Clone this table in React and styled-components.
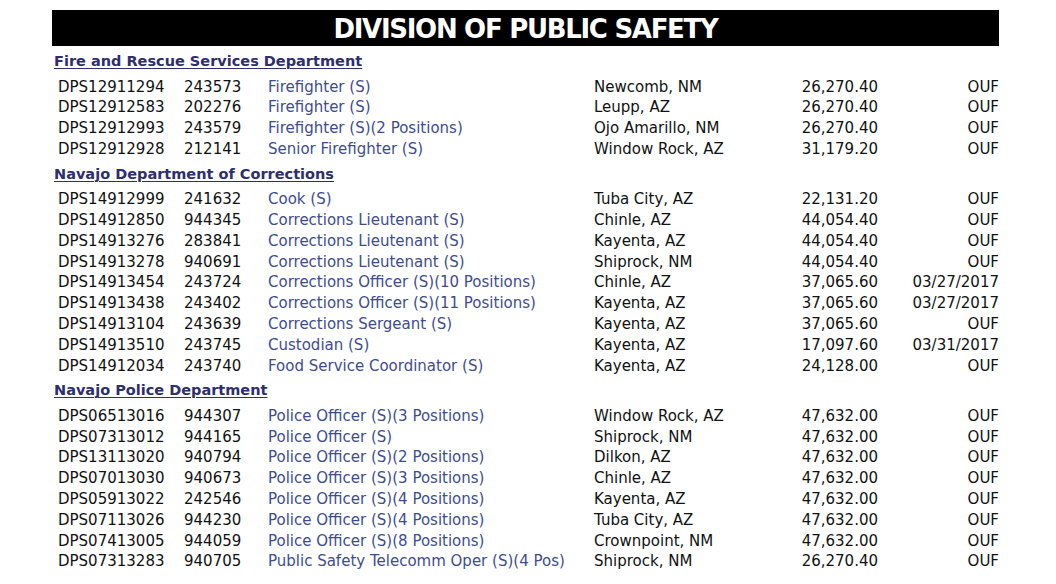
import React from 'react'
import styled, { createGlobalStyle } from 'styled-components'

const GlobalStyle = createGlobalStyle`
  html, body {
    margin: 0;
    background: #fff;
  }
  body {
    font-family: "DejaVu Sans", Verdana, sans-serif;
  }
`

const Page = styled.div`
  padding: 10px 57px 0 52px;
  width: 947px;
`

const Banner = styled.div`
  background: #000;
  height: 36px;
  display: flex;
  align-items: center;
  justify-content: center;
`

const BannerTitle = styled.h1`
  margin: 0;
  color: #fff;
  font-family: "DejaVu Sans", sans-serif;
  font-weight: bold;
  font-size: 26px;
  letter-spacing: -1.3px;
  line-height: 36px;
  padding-top: 2px;
`

const DeptTitle = styled.a`
  display: block;
  padding: 5px 0 3.5px 2px;
  line-height: 21px;
  font-size: 14.5px;
  font-weight: bold;
  color: #2e2e70;
  text-decoration: underline;
  text-decoration-thickness: 1px;
  text-underline-offset: 2px;
`

const Row = styled.div`
  box-sizing: border-box;
  display: grid;
  grid-template-columns: 126px 84px 326px 166px 118px 121px;
  padding: 2px 0 0 6px;
  height: 20.8px;
  line-height: 18.8px;
  font-size: 15px;
  color: #111;
  white-space: nowrap;
`

const Cell = styled.span`
  text-align: ${({ $right }) => ($right ? 'right' : 'left')};
`

const JobLink = styled.a`
  color: #3e4c92;
  text-decoration: none;
`

const sections = [
  {
    name: 'Fire and Rescue Services Department',
    rows: [
      ['DPS12911294', '243573', 'Firefighter (S)', 'Newcomb, NM', '26,270.40', 'OUF'],
      ['DPS12912583', '202276', 'Firefighter (S)', 'Leupp, AZ', '26,270.40', 'OUF'],
      ['DPS12912993', '243579', 'Firefighter (S)(2 Positions)', 'Ojo Amarillo, NM', '26,270.40', 'OUF'],
      ['DPS12912928', '212141', 'Senior Firefighter (S)', 'Window Rock, AZ', '31,179.20', 'OUF'],
    ],
  },
  {
    name: 'Navajo Department of Corrections',
    rows: [
      ['DPS14912999', '241632', 'Cook (S)', 'Tuba City, AZ', '22,131.20', 'OUF'],
      ['DPS14912850', '944345', 'Corrections Lieutenant (S)', 'Chinle, AZ', '44,054.40', 'OUF'],
      ['DPS14913276', '283841', 'Corrections Lieutenant (S)', 'Kayenta, AZ', '44,054.40', 'OUF'],
      ['DPS14913278', '940691', 'Corrections Lieutenant (S)', 'Shiprock, NM', '44,054.40', 'OUF'],
      ['DPS14913454', '243724', 'Corrections Officer (S)(10 Positions)', 'Chinle, AZ', '37,065.60', '03/27/2017'],
      ['DPS14913438', '243402', 'Corrections Officer (S)(11 Positions)', 'Kayenta, AZ', '37,065.60', '03/27/2017'],
      ['DPS14913104', '243639', 'Corrections Sergeant (S)', 'Kayenta, AZ', '37,065.60', 'OUF'],
      ['DPS14913510', '243745', 'Custodian (S)', 'Kayenta, AZ', '17,097.60', '03/31/2017'],
      ['DPS14912034', '243740', 'Food Service Coordinator (S)', 'Kayenta, AZ', '24,128.00', 'OUF'],
    ],
  },
  {
    name: 'Navajo Police Department',
    rows: [
      ['DPS06513016', '944307', 'Police Officer (S)(3 Positions)', 'Window Rock, AZ', '47,632.00', 'OUF'],
      ['DPS07313012', '944165', 'Police Officer (S)', 'Shiprock, NM', '47,632.00', 'OUF'],
      ['DPS13113020', '940794', 'Police Officer (S)(2 Positions)', 'Dilkon, AZ', '47,632.00', 'OUF'],
      ['DPS07013030', '940673', 'Police Officer (S)(3 Positions)', 'Chinle, AZ', '47,632.00', 'OUF'],
      ['DPS05913022', '242546', 'Police Officer (S)(4 Positions)', 'Kayenta, AZ', '47,632.00', 'OUF'],
      ['DPS07113026', '944230', 'Police Officer (S)(4 Positions)', 'Tuba City, AZ', '47,632.00', 'OUF'],
      ['DPS07413005', '944059', 'Police Officer (S)(8 Positions)', 'Crownpoint, NM', '47,632.00', 'OUF'],
      ['DPS07313283', '940705', 'Public Safety Telecomm Oper (S)(4 Pos)', 'Shiprock, NM', '26,270.40', 'OUF'],
    ],
  },
]

export default function App() {
  return (
    <>
      <GlobalStyle />
      <Page>
        <Banner>
          <BannerTitle>DIVISION OF PUBLIC SAFETY</BannerTitle>
        </Banner>
        {sections.map((s) => (
          <section key={s.name}>
            <DeptTitle>{s.name}</DeptTitle>
            {s.rows.map((r) => (
              <Row key={r[0]}>
                <Cell>{r[0]}</Cell>
                <Cell>{r[1]}</Cell>
                <Cell>
                  <JobLink>{r[2]}</JobLink>
                </Cell>
                <Cell>{r[3]}</Cell>
                <Cell $right>{r[4]}</Cell>
                <Cell $right>{r[5]}</Cell>
              </Row>
            ))}
          </section>
        ))}
      </Page>
    </>
  )
}
